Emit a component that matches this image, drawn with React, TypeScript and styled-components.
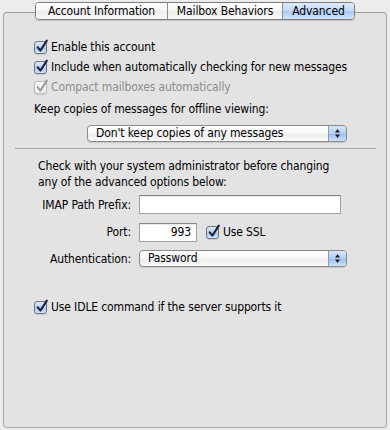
import React from 'react';
import styled, { createGlobalStyle } from 'styled-components';

const GlobalStyle = createGlobalStyle`
  html, body {
    margin: 0;
    padding: 0;
    background: #ececec;
  }
  body {
    font-family: "DejaVu Sans Condensed", "Liberation Sans", sans-serif;
    font-size: 12px;
    letter-spacing: -0.12px;
    color: #000;
  }
`;

const Window = styled.div`
  width: 390px;
  height: 430px;
  box-sizing: border-box;
  padding: 2px 3px 2px 3px;
  display: flex;
  flex-direction: column;
`;

const TabBar = styled.div`
  align-self: center;
  display: flex;
  height: 18px;
  box-sizing: border-box;
  position: relative;
  z-index: 1;
  border: 1px solid #7c7c7c;
  border-radius: 4px;
  overflow: hidden;
  box-shadow: 0 1px 1px rgba(0, 0, 0, 0.15);
`;

const Tab = styled.div<{ $active?: boolean; $width: number }>`
  width: ${p => p.$width}px;
  box-sizing: border-box;
  display: flex;
  align-items: center;
  justify-content: center;
  line-height: 16px;
  background: ${p =>
    p.$active
      ? 'linear-gradient(#dceafc, #c0d8f8 50%, #a9caf4 51%, #d2e5fb)'
      : 'linear-gradient(#ffffff, #f6f6f6 50%, #ececec 51%, #fafafa)'};

  & + & {
    border-left: 1px solid #8e8e8e;
  }
`;

const Panel = styled.section`
  flex: 1;
  margin-top: -8px;
  background: #e3e3e3;
  border: 1px solid #aaaaaa;
  border-top-color: #999999;
  border-radius: 4px;
  padding: 24px 20px 0 30px;
  display: flex;
  flex-direction: column;
`;

const CheckRow = styled.label<{ $disabled?: boolean; $top?: number }>`
  display: flex;
  align-items: center;
  gap: 4px;
  height: 20px;
  margin-top: ${p => p.$top || 0}px;
  color: ${p => (p.$disabled ? '#8d8d8d' : '#000')};
`;

const Box = styled.span<{ $disabled?: boolean }>`
  position: relative;
  flex: none;
  width: 13px;
  height: 13px;
  box-sizing: border-box;
  border: 1px solid ${p => (p.$disabled ? '#bcbcbc' : '#6c7687')};
  border-radius: 3px;
  background: ${p =>
    p.$disabled
      ? 'linear-gradient(#fbfbfb, #ededed)'
      : 'linear-gradient(#dbe8f9, #bcd3f2 50%, #a6c3ec 51%, #d6e6f9)'};
  box-shadow: 0 1px 1px rgba(0, 0, 0, 0.12);

  svg {
    position: absolute;
    left: 0px;
    top: -3px;
  }
`;

const Text = styled.div<{ $top?: number }>`
  line-height: 16px;
  margin-top: ${p => p.$top || 0}px;
`;

const Note = styled.div`
  line-height: 16px;
  margin-top: 9px;
  padding-left: 4px;
`;

const Popup = styled.div<{ $width: number; $top?: number; $left?: number }>`
  display: flex;
  align-items: center;
  width: ${p => p.$width}px;
  height: 17px;
  box-sizing: border-box;
  margin-top: ${p => p.$top || 0}px;
  margin-left: ${p => p.$left || 0}px;
  border: 1px solid #8a8a8a;
  border-radius: 4px;
  overflow: hidden;
  background: linear-gradient(#ffffff, #f7f7f7 50%, #ececec 51%, #fbfbfb);
  box-shadow: 0 1px 1px rgba(0, 0, 0, 0.12);
`;

const PopupLabel = styled.span`
  flex: 1;
  padding-left: 8px;
  line-height: 15px;
  white-space: nowrap;
`;

const Stepper = styled.span`
  align-self: stretch;
  width: 17px;
  display: flex;
  align-items: center;
  justify-content: center;
  border-left: 1px solid #8a9cbc;
  background: linear-gradient(#d6e6fb, #b1cff4 50%, #98bdef 51%, #cfe2fa);
`;

const Separator = styled.hr`
  border: none;
  border-top: 1px solid #a4a4a4;
  margin: 6px -10px 0 -19px;
  height: 0;
`;

const Form = styled.div`
  display: grid;
  grid-template-columns: 97px 1fr;
  column-gap: 8px;
  align-items: center;
`;

const FieldLabel = styled.div<{ $top?: number }>`
  text-align: right;
  margin-top: ${p => p.$top || 0}px;
  white-space: nowrap;
`;

const Field = styled.div<{ $top?: number }>`
  display: flex;
  align-items: center;
  margin-top: ${p => p.$top || 0}px;
`;

const Input = styled.input<{ $width: number; $right?: boolean }>`
  width: ${p => p.$width}px;
  height: 19px;
  box-sizing: border-box;
  border: 1px solid #a2a2a2;
  border-top-color: #868686;
  background: #fff;
  box-shadow: inset 0 1px 1px rgba(0, 0, 0, 0.1);
  font: inherit;
  letter-spacing: inherit;
  padding: 0 5px;
  text-align: ${p => (p.$right ? 'right' : 'left')};
  outline: none;
`;

const InlineCheck = styled(CheckRow)`
  margin-left: 9px;
`;

const Check = ({ disabled }: { disabled?: boolean }) => (
  <Box $disabled={disabled}>
    <svg width="15" height="15" viewBox="0 0 15 15">
      <path
        d="M2.6 8.2 L5.4 11.6 L11.8 1.6"
        fill="none"
        stroke={disabled ? '#9a9a9a' : '#14213a'}
        strokeWidth="2"
        strokeLinejoin="round"
        strokeLinecap="round"
      />
    </svg>
  </Box>
);

const Arrows = () => (
  <svg width="7" height="11" viewBox="0 0 7 11">
    <path d="M3.5 1 L6 4.5 L1 4.5 Z M1 6.5 L6 6.5 L3.5 10 Z" fill="#1c1c1c" />
  </svg>
);

const App = () => {
  return (
    <>
      <GlobalStyle />
      <Window>
        <TabBar>
          <Tab $width={131}>Account Information</Tab>
          <Tab $width={115}>Mailbox Behaviors</Tab>
          <Tab $width={72} $active>
            Advanced
          </Tab>
        </TabBar>
        <Panel>
          <CheckRow>
            <Check />
            Enable this account
          </CheckRow>
          <CheckRow>
            <Check />
            Include when automatically checking for new messages
          </CheckRow>
          <CheckRow $disabled>
            <Check disabled />
            Compact mailboxes automatically
          </CheckRow>

          <Text $top={4}>Keep copies of messages for offline viewing:</Text>
          <Popup $width={260} $top={8} $left={53}>
            <PopupLabel>Don't keep copies of any messages</PopupLabel>
            <Stepper>
              <Arrows />
            </Stepper>
          </Popup>

          <Separator />

          <Note>
            Check with your system administrator before changing
            <br />
            any of the advanced options below:
          </Note>

          <Form>
            <FieldLabel $top={5}>IMAP Path Prefix:</FieldLabel>
            <Field $top={5}>
              <Input $width={202} defaultValue="" />
            </Field>

            <FieldLabel $top={8}>Port:</FieldLabel>
            <Field $top={8}>
              <Input $width={58} $right defaultValue="993" />
              <InlineCheck>
                <Check />
                Use SSL
              </InlineCheck>
            </Field>

            <FieldLabel $top={8}>Authentication:</FieldLabel>
            <Field $top={8}>
              <Popup $width={208}>
                <PopupLabel>Password</PopupLabel>
                <Stepper>
                  <Arrows />
                </Stepper>
              </Popup>
            </Field>
          </Form>

          <CheckRow $top={30}>
            <Check />
            Use IDLE command if the server supports it
          </CheckRow>
        </Panel>
      </Window>
    </>
  );
};

export default App;
